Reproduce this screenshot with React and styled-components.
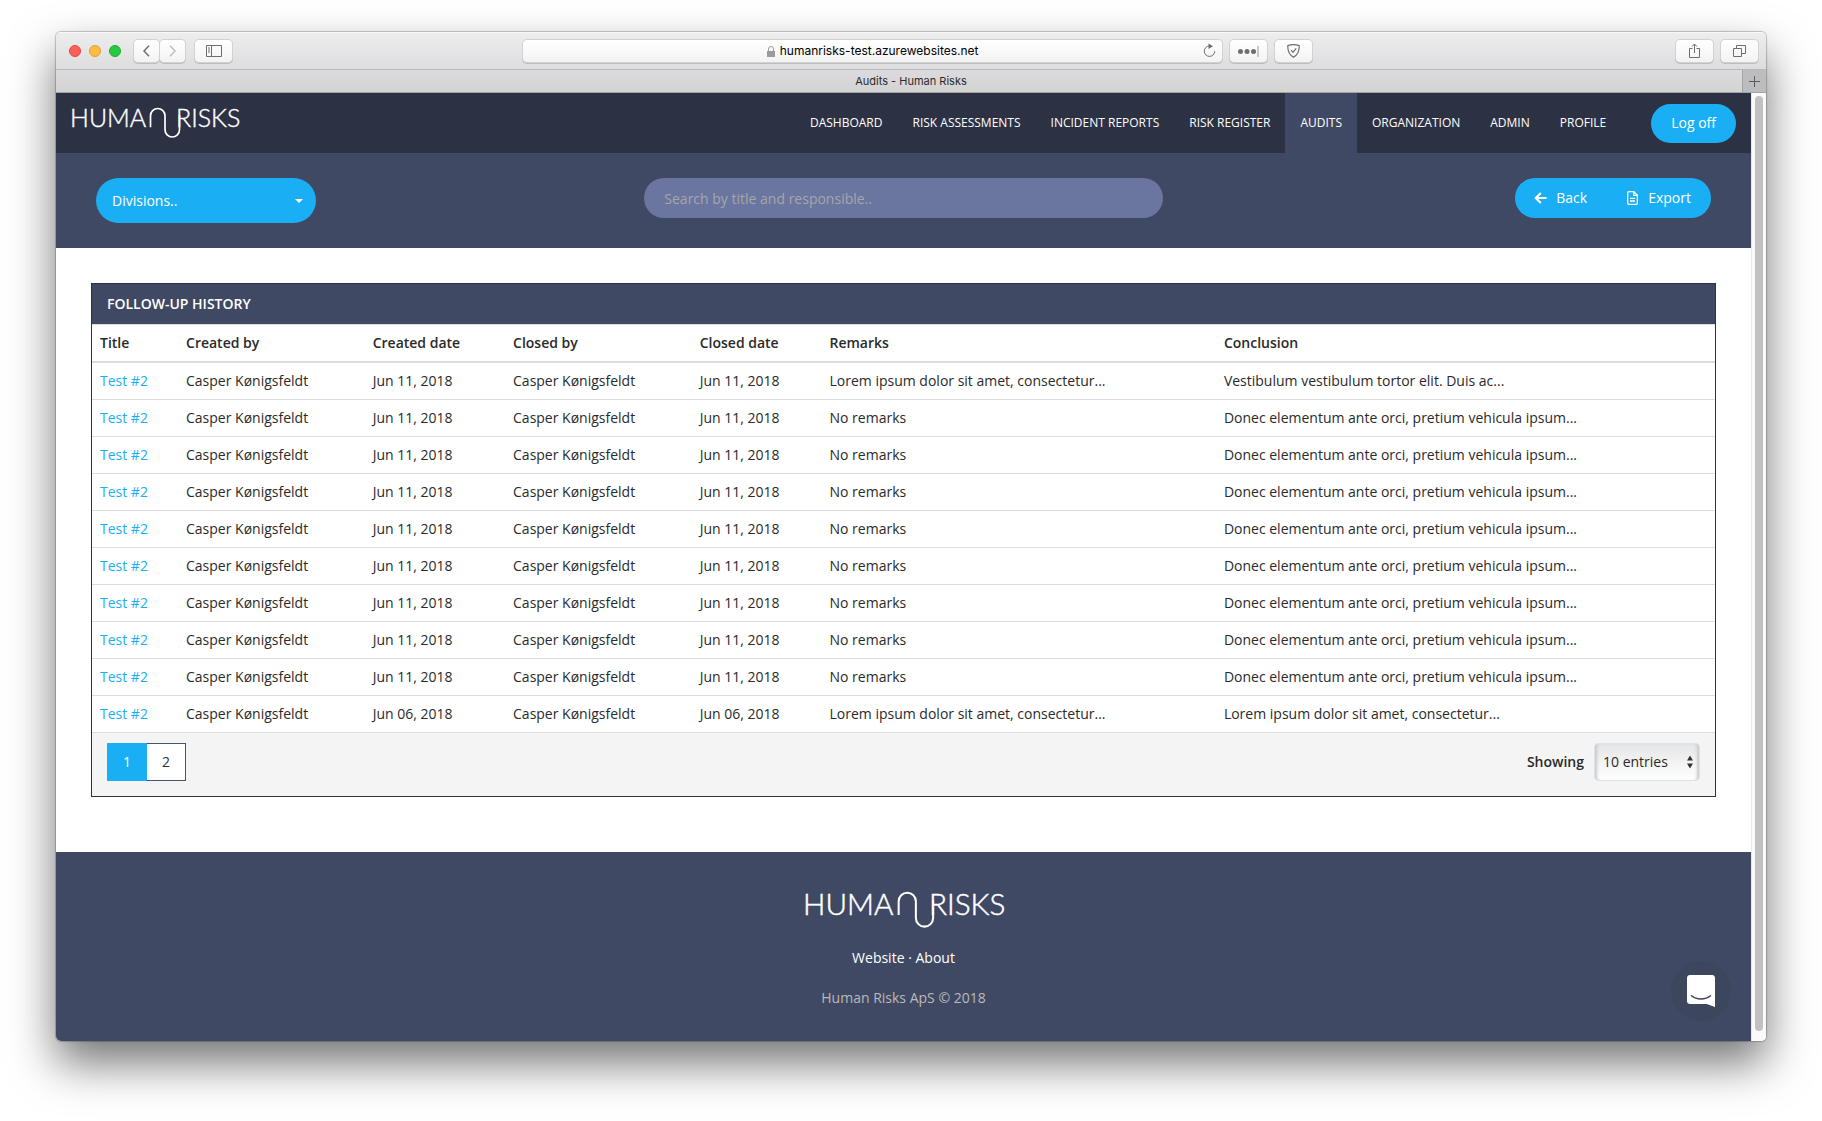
import React from "react";
import styled, { createGlobalStyle, css } from "styled-components";

const color = {
  navy: "#2c3144",
  slate: "#404963",
  blue: "#1aaff4",
  field: "#6a769f",
  text: "#2a2a2a",
  line: "#dddddd",
  glyph: "#6e6e6e",
};

const uiFont = `Inter, "Liberation Sans", sans-serif`;

const GlobalStyle = createGlobalStyle`
  *, *::before, *::after { box-sizing: border-box; }
  body {
    margin: 0;
    background: #ffffff;
    color: ${color.text};
    font: 14px/20px "Open Sans", "Noto Sans", sans-serif;
  }
  button, input, select { font: inherit; color: inherit; margin: 0; }
  a { text-decoration: none; color: inherit; }
  ul { list-style: none; margin: 0; padding: 0; }
  svg { display: block; }
`;

/* ---------- Browser window ---------- */

const Desktop = styled.div`
  padding: 32px 56px 80px;
`;

const Window = styled.div`
  border-radius: 5px;
  box-shadow: 0 0 1px 1px rgba(0, 0, 0, 0.22), 0 22px 46px rgba(0, 0, 0, 0.55);
`;

const Clip = styled.div`
  border-radius: 5px;
  overflow: hidden;
`;

const Toolbar = styled.div`
  display: flex;
  align-items: center;
  height: 38px;
  padding: 0 8px 0 13px;
  background: linear-gradient(#ededee, #dddcde);
  border-top: 1px solid #f8f8f8;
  border-bottom: 1px solid #b9b7ba;
`;

const Lights = styled.div`
  display: flex;
  gap: 8px;
  margin-right: 12px;
`;

const Light = styled.span`
  width: 12px;
  height: 12px;
  border-radius: 50%;
  background: ${(p) => p.$fill};
  border: 1px solid ${(p) => p.$edge};
`;

const chromeBox = css`
  display: flex;
  align-items: center;
  justify-content: center;
  height: 22px;
  border: 0;
  border-radius: 4px;
  background: linear-gradient(#ffffff, #f3f3f3);
  box-shadow: 0 0 0 1px #d2d1d3, 0 1px 0 1px #bdbcbe;
  color: ${color.glyph};
`;

const ChromeButton = styled.button`
  ${chromeBox}
  flex: none;
  width: ${(p) => (p.$narrow ? 25 : 37)}px;
  padding: 0;
  &:disabled { color: #bdbdbd; }
`;

const ButtonRow = styled.div`
  display: flex;
  flex: none;
  gap: ${(p) => p.$gap}px;
  margin-left: ${(p) => p.$before || 0}px;
`;

const Spacer = styled.div`
  flex: ${(p) => p.$grow};
`;

const AddressBar = styled.div`
  ${chromeBox}
  position: relative;
  width: 41.4%;
  font: 12px/16px ${uiFont};
  color: #000000;
  gap: 5px;
`;

const Reload = styled.button`
  position: absolute;
  right: 6px;
  top: 3px;
  padding: 0;
  border: 0;
  background: none;
  color: ${color.glyph};
`;

const TabBar = styled.div`
  display: grid;
  grid-template-columns: 24px 1fr 24px;
  height: 23px;
  background: linear-gradient(#dcdadd, #d4d4d4);
  border-bottom: 1px solid #a3a2a4;
  font: 11px/22px ${uiFont};
  color: #2b2b2b;
`;

const TabTitle = styled.div`
  grid-column: 2;
  text-align: center;
`;

const NewTab = styled.button`
  display: flex;
  align-items: center;
  justify-content: center;
  padding: 0;
  border: 0;
  border-left: 1px solid #a3a2a4;
  background: #bdbcbe;
  color: #5c5c5c;
`;

const Viewport = styled.div`
  display: flex;
  background: #ffffff;
`;

const Page = styled.div`
  position: relative;
  flex: 1;
  min-width: 0;
`;

const ScrollTrack = styled.div`
  display: flex;
  width: 15px;
  padding: 3px 3px 10px;
  border-left: 1px solid #e8e8e8;
  background: #fafafa;
`;

const ScrollThumb = styled.div`
  flex: 1;
  border-radius: 4px;
  background: #c1c1c1;
`;

/* ---------- Site header ---------- */

const NavBar = styled.nav`
  display: flex;
  align-items: center;
  height: 60px;
  padding: 0 15px 0 14px;
  background: ${color.navy};
  color: #ffffff;
`;

const NavList = styled.ul`
  display: flex;
  margin-left: auto;
  margin-right: 30px;
`;

const NavLink = styled.a`
  display: block;
  padding: 0 15px;
  font-size: 12px;
  line-height: 60px;
  background: ${(p) => (p.$active ? color.slate : "transparent")};
`;

const LogOff = styled.button`
  height: 39px;
  padding: 0 20px;
  border: 0;
  border-radius: 20px;
  background: ${color.blue};
`;

const FilterBar = styled.div`
  display: grid;
  grid-template-columns: repeat(3, 1fr);
  gap: 30px;
  align-items: start;
  padding: 25px 40px;
  background: ${color.slate};
  color: #ffffff;
`;

const SelectWrap = styled.div`
  position: relative;
  width: ${(p) => p.$width}px;
`;

const SelectMark = styled.span`
  position: absolute;
  top: 50%;
  right: ${(p) => p.$right}px;
  transform: translateY(-50%);
  pointer-events: none;
`;

const DivisionSelect = styled.select`
  appearance: none;
  display: block;
  width: 100%;
  height: 45px;
  padding: 0 36px 0 16px;
  border: 0;
  border-radius: 23px;
  background: ${color.blue};
`;

const SearchInput = styled.input`
  width: 100%;
  height: 40px;
  padding: 0 20px;
  border: 0;
  border-radius: 20px;
  background: ${color.field};
  &::placeholder { color: #a5a6a9; opacity: 1; }
`;

const ActionGroup = styled.div`
  display: flex;
  justify-self: end;
  border-radius: 20px;
  overflow: hidden;
`;

const ActionButton = styled.button`
  display: flex;
  align-items: center;
  gap: 7px;
  height: 40px;
  padding: 0 20px 0 16px;
  border: 0;
  background: ${color.blue};
`;

const IconSlot = styled.span`
  display: flex;
  justify-content: center;
  width: 18px;
`;

/* ---------- History card ---------- */

const Main = styled.main`
  padding: 35px 35px 55px;
`;

const Card = styled.section`
  border: 1px solid ${color.navy};
`;

const CardTitle = styled.h2`
  margin: 0;
  padding: 10px 15px;
  background: ${color.slate};
  color: #ffffff;
  font-size: 14px;
  line-height: 20px;
  font-weight: 600;
`;

const Table = styled.table`
  width: 100%;
  table-layout: fixed;
  border-collapse: separate;
  border-spacing: 0;
`;

const Col = styled.col`
  width: ${(p) => p.$width};
`;

const HeadCell = styled.th`
  padding: 8px;
  text-align: left;
  font-weight: 600;
  border-top: 1px solid ${color.line};
  border-bottom: 2px solid ${color.line};
`;

const Cell = styled.td`
  padding: 8px;
  white-space: nowrap;
  border-bottom: 1px solid ${color.line};
`;

const TitleLink = styled.a`
  color: ${color.blue};
`;

const CardFooter = styled.div`
  display: flex;
  justify-content: space-between;
  padding: 10px 15px 15px;
  background: #f4f4f4;
`;

const Pager = styled.div`
  display: flex;
`;

const PageButton = styled.button`
  width: ${(p) => (p.$active ? 40 : 39)}px;
  height: 38px;
  padding: 0;
  border: 1px solid ${(p) => (p.$active ? color.blue : "#44546e")};
  background: ${(p) => (p.$active ? color.blue : "#ffffff")};
  color: ${(p) => (p.$active ? "#ffffff" : color.navy)};
  & + & { border-left: 0; }
`;

const Entries = styled.div`
  display: flex;
  align-items: center;
  gap: 10px;
`;

const EntriesLabel = styled.label`
  font-weight: 600;
`;

const EntriesSelect = styled.select`
  appearance: none;
  display: block;
  width: 100%;
  height: 38px;
  padding: 0 8px;
  border: 1px solid #dbe3ec;
  border-radius: 4px;
  background: linear-gradient(#e6e6e6, #ffffff);
  box-shadow: inset 4px 0 3px -2px #c9c9c9, inset -4px 0 3px -2px #c9c9c9;
`;

/* ---------- Site footer ---------- */

const Footer = styled.footer`
  display: flex;
  flex-direction: column;
  align-items: center;
  padding: 39px 0 33px;
  background: ${color.slate};
  color: #ffffff;
`;

const FooterLinks = styled.p`
  margin: 19px 0 20px;
`;

const Copyright = styled.p`
  margin: 0;
  color: #b9b9b9;
`;

const ChatButton = styled.button`
  position: absolute;
  right: 20px;
  bottom: 20px;
  display: flex;
  align-items: center;
  justify-content: center;
  width: 60px;
  height: 60px;
  padding: 0;
  border: 0;
  border-radius: 50%;
  background: #3c475d;
`;

const Wordmark = styled.svg`
  overflow: visible;
  text {
    font-family: Lato, sans-serif;
    font-weight: 300;
    font-size: 25px;
    fill: #ffffff;
    stroke: #ffffff;
    stroke-width: 0.4px;
  }
`;

function Logo({ width, height }) {
  return (
    <Wordmark width={width} height={height} viewBox="0 0 170 32" role="img" aria-label="Human Risks">
      <text x="0" y="20">HUMA</text>
      <path
        d="M80.5 20.300V8.750a7.250 7.250 0 0 1 14.500 0v14a7.250 7.250 0 0 0 14.500 0V8"
        fill="none"
        stroke="#ffffff"
        strokeWidth="1.700"
      />
      <text x="106" y="20">RISKS</text>
    </Wordmark>
  );
}

const Stroke = ({ w, h, d, width = 1.2 }) => (
  <svg width={w} height={h} viewBox={`0 0 ${w} ${h}`} fill="none" stroke="currentColor" strokeWidth={width}>
    <path d={d} />
  </svg>
);

const SidebarIcon = () => (
  <svg width="16" height="12" viewBox="0 0 16 12" fill="none" stroke="currentColor">
    <path d="M.5.5h15v11H.5zM5.5.5v11M2 3h2M2 5h2M2 7h2" />
  </svg>
);

const LockIcon = () => (
  <svg width="8" height="11" viewBox="0 0 8 11">
    <path d="M1.5 5V3a2.500 2.500 0 0 1 5 0v2" fill="none" stroke="#9b9b9b" />
    <path d="M0 5h8v6H0z" fill="#9b9b9b" />
  </svg>
);

const ReloadIcon = () => (
  <svg width="13" height="15" viewBox="0 0 13 15">
    <path d="M6.500 3A5.200 5.200 0 1 0 11.700 8.200" fill="none" stroke="currentColor" />
    <path d="M5.500 .5 10 3.200 5.500 6z" fill="currentColor" />
  </svg>
);

const DotsIcon = () => (
  <svg width="21" height="11" viewBox="0 0 21 11" fill="currentColor">
    <circle cx="2.500" cy="5.500" r="2.500" />
    <circle cx="9" cy="5.500" r="2.500" />
    <circle cx="15.500" cy="5.500" r="2.500" />
    <path d="M19.500 0h1v11h-1z" opacity=".7" />
  </svg>
);

const ShieldIcon = () => (
  <svg width="13" height="14" viewBox="0 0 13 14" fill="none" stroke="currentColor" strokeWidth="1.200">
    <path d="M.8 1.600Q6.500-.2 12.200 1.600C12.500 8 10.500 11 6.500 13.300 2.500 11 .5 8 .8 1.600z" />
    <path d="M4 6.200l2 2.200 3.200-4" />
  </svg>
);

const ShareIcon = () => (
  <svg width="11" height="16" viewBox="0 0 11 16" fill="none" stroke="currentColor">
    <path d="M3.500 5.500h-3v9h10v-9h-3M5.500 10V1M3 3.500 5.500 1 8 3.500" />
  </svg>
);

const WindowsIcon = () => (
  <svg width="13" height="12" viewBox="0 0 13 12" fill="none" stroke="currentColor">
    <path d="M.5 3.500h8v8h-8zM3.500 3.500v-3h9v8h-4" />
  </svg>
);

const FileIcon = () => (
  <svg width="11" height="14" viewBox="0 0 11 14" fill="none" stroke="currentColor" strokeWidth="1.300">
    <path d="M1.700.7h5.100l3.500 3.500v8.100a1 1 0 0 1-1 1H1.700a1 1 0 0 1-1-1V1.700a1 1 0 0 1 1-1z" />
    <path d="M6.700.7v3.600h3.600M3 7.300h5M3 10h5" />
  </svg>
);

const ChatIcon = () => (
  <svg width="28" height="32" viewBox="0 0 28 32">
    <path d="M28 32s-4.700-1.900-8.200-3H3c-1.700 0-3-1.200-3-2.800V2.800C0 1.200 1.300 0 3 0h22c1.700 0 3 1.200 3 2.800V32z" fill="#ffffff" />
    <path d="M4.500 20.800c5 4.300 14 4.300 19 0" fill="none" stroke="#3c475d" strokeWidth="1.500" strokeLinecap="round" />
  </svg>
);

const navItems = [
  "DASHBOARD",
  "RISK ASSESSMENTS",
  "INCIDENT REPORTS",
  "RISK REGISTER",
  "AUDITS",
  "ORGANIZATION",
  "ADMIN",
  "PROFILE",
];

const columns = [
  ["Title", "5.3%"],
  ["Created by", "11.5%"],
  ["Created date", "8.65%"],
  ["Closed by", "11.5%"],
  ["Closed date", "8%"],
  ["Remarks", "24.3%"],
  ["Conclusion", "auto"],
];

const person = "Casper Kønigsfeldt";
const lorem = "Lorem ipsum dolor sit amet, consectetur...";
const row = (date, remarks, conclusion) => ({ date, remarks, conclusion });

const rows = [
  row("Jun 11, 2018", lorem, "Vestibulum vestibulum tortor elit. Duis ac..."),
  ...Array.from({ length: 8 }, () =>
    row("Jun 11, 2018", "No remarks", "Donec elementum ante orci, pretium vehicula ipsum...")
  ),
  row("Jun 06, 2018", lorem, lorem),
];

function BrowserChrome() {
  return (
    <>
      <Toolbar>
        <Lights>
          <Light $fill="#fc605c" $edge="#e2463f" />
          <Light $fill="#fdbc40" $edge="#e0a12f" />
          <Light $fill="#28c940" $edge="#1fab2e" />
        </Lights>
        <ButtonRow $gap={1} $before={1}>
          <ChromeButton $narrow aria-label="Previous page">
            <Stroke w={7} h={12} d="M6 .8 1 6l5 5.200" width={1.5} />
          </ChromeButton>
          <ChromeButton $narrow disabled aria-label="Next page">
            <Stroke w={7} h={12} d="M1 .8 6 6l-5 5.200" width={1.5} />
          </ChromeButton>
        </ButtonRow>
        <ButtonRow $before={10}>
          <ChromeButton aria-label="Sidebar"><SidebarIcon /></ChromeButton>
        </ButtonRow>
        <Spacer $grow={4} />
        <AddressBar>
          <LockIcon />
          <span>humanrisks-test.azurewebsites.net</span>
          <Reload aria-label="Reload"><ReloadIcon /></Reload>
        </AddressBar>
        <ButtonRow $gap={8} $before={8}>
          <ChromeButton aria-label="Passwords"><DotsIcon /></ChromeButton>
          <ChromeButton aria-label="Privacy"><ShieldIcon /></ChromeButton>
        </ButtonRow>
        <Spacer $grow={5} />
        <ButtonRow $gap={8}>
          <ChromeButton aria-label="Share"><ShareIcon /></ChromeButton>
          <ChromeButton aria-label="Show tabs"><WindowsIcon /></ChromeButton>
        </ButtonRow>
      </Toolbar>
      <TabBar>
        <TabTitle>Audits - Human Risks</TabTitle>
        <NewTab aria-label="New tab">
          <Stroke w={11} h={11} d="M5.500 0v11M0 5.500h11" width={1} />
        </NewTab>
      </TabBar>
    </>
  );
}

function HistoryCard() {
  return (
    <Card>
      <CardTitle>FOLLOW-UP HISTORY</CardTitle>
      <Table>
        <colgroup>
          {columns.map(([name, width]) => <Col key={name} $width={width} />)}
        </colgroup>
        <thead>
          <tr>
            {columns.map(([name]) => <HeadCell key={name} scope="col">{name}</HeadCell>)}
          </tr>
        </thead>
        <tbody>
          {rows.map((r, i) => (
            <tr key={i}>
              <Cell><TitleLink href="#">Test #2</TitleLink></Cell>
              <Cell>{person}</Cell>
              <Cell>{r.date}</Cell>
              <Cell>{person}</Cell>
              <Cell>{r.date}</Cell>
              <Cell>{r.remarks}</Cell>
              <Cell>{r.conclusion}</Cell>
            </tr>
          ))}
        </tbody>
      </Table>
      <CardFooter>
        <Pager>
          <PageButton $active>1</PageButton>
          <PageButton>2</PageButton>
        </Pager>
        <Entries>
          <EntriesLabel htmlFor="entries">Showing</EntriesLabel>
          <SelectWrap $width={106}>
            <EntriesSelect id="entries">
              <option>10 entries</option>
            </EntriesSelect>
            <SelectMark $right={7}>
              <svg width="6" height="13" viewBox="0 0 6 13" fill="#333333">
                <path d="M3 0 6 5H0zM3 13 0 8h6z" />
              </svg>
            </SelectMark>
          </SelectWrap>
        </Entries>
      </CardFooter>
    </Card>
  );
}

export default function App() {
  return (
    <>
      <GlobalStyle />
      <Desktop>
        <Window>
          <Clip>
            <BrowserChrome />
            <Viewport>
              <Page>
                <NavBar>
                  <a href="#"><Logo width={170} height={32} /></a>
                  <NavList>
                    {navItems.map((name) => (
                      <li key={name}>
                        <NavLink href="#" $active={name === "AUDITS"}>{name}</NavLink>
                      </li>
                    ))}
                  </NavList>
                  <LogOff>Log off</LogOff>
                </NavBar>
                <FilterBar>
                  <SelectWrap $width={220}>
                    <DivisionSelect aria-label="Divisions">
                      <option>Divisions..</option>
                    </DivisionSelect>
                    <SelectMark $right={13}>
                      <svg width="8" height="4" viewBox="0 0 8 4" fill="#ffffff"><path d="M0 0h8L4 4z" /></svg>
                    </SelectMark>
                  </SelectWrap>
                  <SearchInput aria-label="Search" placeholder="Search by title and responsible.." />
                  <ActionGroup>
                    <ActionButton>
                      <IconSlot>
                        <Stroke w={13} h={12} d="M6.800 .9 1.700 6l5.100 5.100M2 6h10.500" width={2.1} />
                      </IconSlot>
                      Back
                    </ActionButton>
                    <ActionButton>
                      <IconSlot><FileIcon /></IconSlot>
                      Export
                    </ActionButton>
                  </ActionGroup>
                </FilterBar>
                <Main>
                  <HistoryCard />
                </Main>
                <Footer>
                  <Logo width={204} height={38} />
                  <FooterLinks>
                    <a href="#">Website</a> · <a href="#">About</a>
                  </FooterLinks>
                  <Copyright>Human Risks ApS © 2018</Copyright>
                </Footer>
                <ChatButton aria-label="Open chat"><ChatIcon /></ChatButton>
              </Page>
              <ScrollTrack><ScrollThumb /></ScrollTrack>
            </Viewport>
          </Clip>
        </Window>
      </Desktop>
    </>
  );
}
